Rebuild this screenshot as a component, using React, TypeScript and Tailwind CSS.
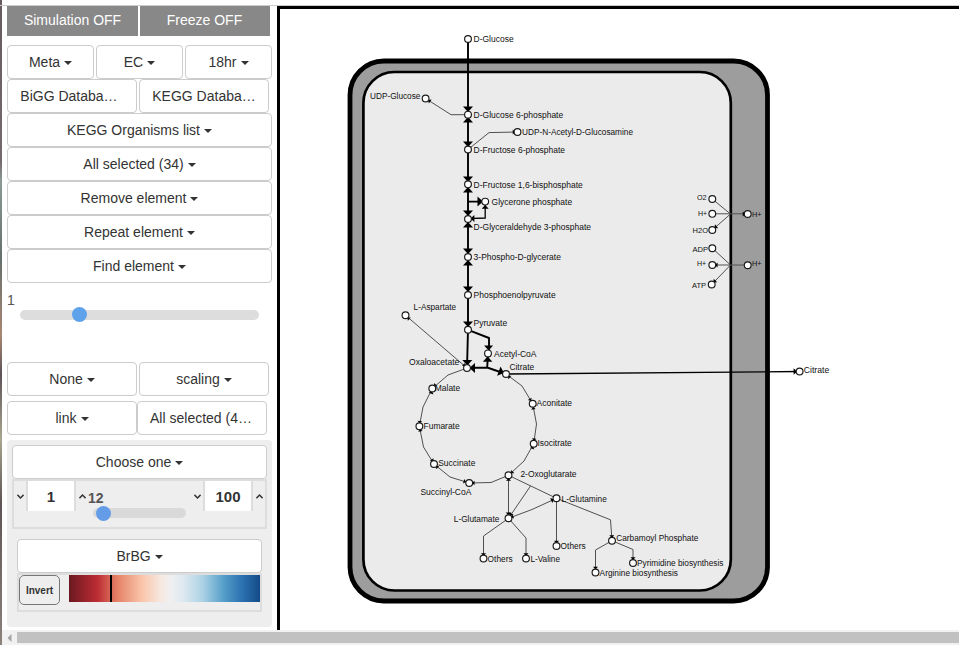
import React from "react";
import clsx from "clsx";

function Caret() {
  return <span className="ml-[4px] inline-block border-x-4 border-t-4 border-x-transparent border-t-[#333] align-middle" />;
}

function Drop({ label, className, caret = true }: { label: string; className?: string; caret?: boolean }) {
  return (
    <button
      className={clsx(
        "h-[34px] shrink-0 whitespace-nowrap rounded border border-[#ccc] bg-white text-center text-sm leading-[20px] text-[#333]",
        className,
      )}
    >
      {label}
      {caret && <Caret />}
    </button>
  );
}

function Chevron({ up = false }: { up?: boolean }) {
  return (
    <svg width="7" height="5" viewBox="0 0 6 4" fill="none" stroke="#333" strokeWidth="1.2">
      <path d={up ? "M0.4 3.4L3 0.8L5.6 3.4" : "M0.4 0.6L3 3.2L5.6 0.6"} />
    </svg>
  );
}

function Stepper({ value }: { value: string }) {
  return (
    <div className="flex h-[30px]">
      <div className="flex w-3 items-center justify-center">
        <Chevron />
      </div>
      <div className="flex w-[50px] items-center justify-center border-x-2 border-[#ddd] bg-white pt-[2px] text-[15px] font-bold text-[#333]">
        {value}
      </div>
      <div className="flex w-3 items-center justify-center">
        <Chevron up />
      </div>
    </div>
  );
}

function Sidebar() {
  return (
    <aside className="h-full w-[277px] shrink-0 pl-[7px]">
      <div className="flex gap-[2px] text-sm text-white [text-shadow:0_1px_1px_rgba(0,0,0,0.45)]">
        <button className="h-[30px] w-[131px] bg-[#888] pb-[2px]">Simulation OFF</button>
        <button className="h-[30px] w-[130px] bg-[#888] pb-[2px] pr-px">Freeze OFF</button>
      </div>
      <div className="mt-[9px] flex gap-[2px]">
        <Drop label="Meta" className="w-[87px]" />
        <Drop label="EC" className="w-[87px]" />
        <Drop label="18hr" className="w-[87px]" />
      </div>
      <div className="flex gap-[2px]">
        <Drop label="BiGG Databa…" caret={false} className="w-[130px] pr-[6px]" />
        <Drop label="KEGG Databa…" caret={false} className="w-[130px]" />
      </div>
      <div className="flex w-[265px] flex-col">
        <Drop label="KEGG Organisms list" />
        <Drop label="All selected (34)" />
        <Drop label="Remove element" />
        <Drop label="Repeat element" />
        <Drop label="Find element" />
      </div>
      <div className="h-[27px] pt-[7px] text-sm leading-5 text-[#555]">1</div>
      <div className="ml-[13px] flex h-[10px] w-[239px] items-center rounded-full bg-[#ddd] pl-[52px]">
        <div className="mb-px size-[15px] shrink-0 rounded-full bg-[#5fa2ec]" />
      </div>
      <div className="mt-[42px] flex gap-[2px]">
        <Drop label="None" className="w-[130px]" />
        <Drop label="scaling" className="w-[130px]" />
      </div>
      <div className="mt-[5px] flex">
        <Drop label="link" className="w-[130px]" />
        <Drop label="All selected (4…" caret={false} className="w-[130px] pr-[2px]" />
      </div>
      <div className="mt-[5px] h-[187px] w-[265px] rounded bg-[#eee] p-[5px]">
        <Drop label="Choose one" className="w-[255px]" />
        <div className="flex h-[50px] border-2 border-[#ddd]">
          <Stepper value="1" />
          <div className="w-[103px]">
            <div className="h-[27px] pt-[7px] text-[14px] font-bold leading-5 text-[#555]">12</div>
            <div className="ml-[5px] flex h-[10px] w-[93px] items-center rounded-full bg-[#d9d9d9] pl-[3px]">
              <div className="size-[15px] shrink-0 rounded-full bg-[#649ce8]" />
            </div>
          </div>
          <Stepper value="100" />
        </div>
        <div className="ml-[5px] mt-[10px] w-[245px]">
          <Drop label="BrBG" className="w-[245px]" />
          <div className="flex h-[39px] border-2 border-[#ddd]">
            <button className="h-[30px] w-[41px] rounded-[5px] border border-[#777] bg-[#eee] text-[10px] font-bold text-[#333]">
              Invert
            </button>
            <div className="ml-[9px] h-[27px] w-[191px] bg-[linear-gradient(to_right,#6b1820,#bd2d35_15%,#e48065_25%,#f9c4a9_38%,#f7e8df_48%,#f0f0f0_53%,#dde9f0_60%,#acd2e5_70%,#559ec9_81%,#2e74b3_90%,#134b87)] pl-[41px]">
              <div className="h-full w-[2px] bg-black" />
            </div>
          </div>
        </div>
      </div>
    </aside>
  );
}

// [x, y]
const nodes: [number, number][] = [
  [468, 39], [468, 114.7], [468, 149.5], [468, 184.3], [485.2, 201.6], [468, 219], [468, 257], [468, 295],
  [468, 329.8], [488, 353.4], [467, 368], [506, 374], [432.3, 388.5], [419.4, 426.3], [434, 464], [469.2, 483],
  [508.5, 475.3], [532.7, 403.7], [533.7, 443.7], [508.5, 518.3], [556.5, 498.3], [556.5, 546], [483.5, 558.5],
  [526, 558.5], [612, 540.7], [595.5, 572.5], [633, 563], [425.6, 98.5], [517.5, 132], [405.5, 315.3],
  [712.3, 199], [712.3, 213.8], [712.3, 230], [747.7, 214], [712.3, 248.2], [712.3, 265], [711.7, 284.5],
  [747.7, 265.3], [799.6, 371.5],
];

// [text, x, baseline, width]
const labels: [string, number, number, number][] = [
  ["D-Glucose", 473.6, 42, 40], ["UDP-Glucose", 370, 99, 50.4], ["D-Glucose 6-phosphate", 473.6, 118, 89.6],
  ["UDP-N-Acetyl-D-Glucosamine", 522, 135, 111], ["D-Fructose 6-phosphate", 473.6, 153, 91.5],
  ["D-Fructose 1,6-bisphosphate", 473.6, 188, 109.2], ["Glycerone phosphate", 491.6, 205, 80.5],
  ["D-Glyceraldehyde 3-phosphate", 473.6, 230, 117.4], ["3-Phospho-D-glycerate", 473.6, 260, 87.3],
  ["Phosphoenolpyruvate", 473.6, 298, 82], ["L-Aspartate", 413.6, 310, 42.6], ["Pyruvate", 473.6, 326, 33.6],
  ["Acetyl-CoA", 494, 357, 42.5], ["Oxaloacetate", 409, 365, 50.3], ["Citrate", 509.4, 370, 24.8],
  ["Malate", 434.8, 391, 25.3], ["Aconitate", 536.6, 406, 35.4], ["Fumarate", 423.6, 429, 36],
  ["Isocitrate", 537.4, 446, 34.4], ["Succinate", 438.2, 466, 37.2], ["Succinyl-CoA", 420.4, 495, 51],
  ["2-Oxoglutarate", 520.4, 477, 56.2], ["L-Glutamine", 561.6, 502, 45.2], ["L-Glutamate", 453.8, 522, 45.6],
  ["Others", 560.6, 549, 25], ["Others", 487.6, 562, 25], ["L-Valine", 530.4, 562, 29.6],
  ["Carbamoyl Phosphate", 616.2, 541, 82.2], ["Pyrimidine biosynthesis", 637, 566, 86.4],
  ["Arginine biosynthesis", 599.6, 576, 78.4], ["Citrate", 803.8, 373, 25.4],
];

const ionLabels: [string, number, number, number][] = [
  ["O2", 697, 200, 9.6], ["H+", 698, 216, 9.2], ["H2O", 692.6, 233, 15.4], ["H+", 752, 217, 9.6],
  ["ADP", 692.6, 252, 15.4], ["H+", 697, 266, 9.2], ["ATP", 692, 288, 14], ["H+", 752, 266, 9.6],
];

// [tip x, tip y, heading in degrees (0 = right, 90 = down), scale]
const heads: [number, number, number, number][] = [
  [468, 112, 90, 1], [468, 117, 270, 1], [468, 147, 90, 1], [468, 182, 90, 1], [468, 187, 270, 1],
  [483, 201.6, 0, 1], [468, 216, 90, 1], [468, 222, 270, 1], [468, 254, 90, 1], [468, 260, 270, 1],
  [468, 292, 90, 1], [468, 327, 90, 1], [467.3, 365.5, 90, 1], [488.6, 350.5, 90, 0.9], [487.6, 356.5, 270, 0.95],
  [469.5, 368, 180, 1], [504, 373, 20, 1], [485.2, 205, 270, 0.7], [470.5, 218.6, 180, 0.7],
  [428, 100, 213, 0.5], [515.5, 132, 0, 0.5], [407.5, 317.5, 222, 0.45], [465, 366, 42, 0.4],
  [432, 391, 290, 0.5], [434, 386, 135, 0.4], [419.6, 423.5, 95, 0.45], [420, 429, 260, 0.45],
  [433, 461.5, 60, 0.45], [436, 466, 220, 0.45], [466, 482, 18, 0.45], [472, 483, 180, 0.45],
  [511, 473.3, 135, 0.45], [508, 376, 220, 0.45], [531, 401, 60, 0.45], [533, 407, 260, 0.45],
  [534, 441, 95, 0.45], [533, 446.5, 290, 0.45], [508.5, 478, 270, 0.5], [508.5, 515.5, 90, 0.55],
  [510, 515.8, 120, 0.5], [554, 499.3, 337, 0.55], [511, 517.3, 157, 0.45], [556.5, 543.5, 90, 0.5],
  [483.5, 556, 90, 0.5], [526, 556, 90, 0.5], [611.8, 538, 90, 0.5], [595.5, 569.5, 90, 0.5],
  [633, 560, 90, 0.5], [745.5, 214, 0, 0.5], [714.5, 228, 140, 0.5], [714.8, 265, 180, 0.5],
  [713.5, 282.5, 135, 0.5], [797.2, 371.5, 0, 0.65],
];

function Pathway() {
  return (
    <svg width="679" height="621" viewBox="280 9 679 621" className="block" fontFamily="Liberation Sans, Arial, sans-serif">
      <rect x="350" y="61" width="417.5" height="540" rx="34" fill="#9d9d9d" stroke="#000" strokeWidth="4.8" />
      <rect x="363.4" y="72" width="367.4" height="518.5" rx="31" fill="#ebebeb" stroke="#000" strokeWidth="2.7" />
      <g fill="none" stroke="#505050" strokeWidth="1">
        <path d="M468 114.7H451L425.6 98.5" />
        <path d="M468 149.5L489 132.6L517.5 132" />
        <path d="M405.5 315.3L467 368" />
        <path d="M467 368L448 375L432.3 388.5L423 407L419.4 426.3L423.5 447L434 464L450 477L469.2 483L491 482.5L508.5 475.3L524 461L533.7 443.7L536.5 424L532.7 403.7L522 386L506 374" />
        <path d="M508.5 475.3V518.3L530.5 486M508.5 475.3L556.5 498.3L532 509.5L508.5 518.3" />
        <path d="M508.5 518.3L483.5 536V558.5M508.5 518.3L526 538V558.5" />
        <path d="M556.5 498.3V546M556.5 498.3L610.5 519.8L612 540.7L595.5 550V572.5M612 540.7L633 549.5V563" />
        <path d="M712.3 199L730.5 214L712.3 230M712.3 213.8H747.7" />
        <path d="M712.3 248.2L730.5 265L711.7 284.5M712.3 265H747.7" />
      </g>
      <g fill="none" stroke="#000" strokeWidth="1.9">
        <path d="M468 39V329.8L467 368M468 201.6H485" />
        <path d="M485.2 201.6V218L468 218.6" strokeWidth="1.3" />
        <path d="M468 329.8L489 338V353.4M488 353.4L487.2 367.5M467 368L487.2 367.5L506 374" />
        <path d="M506 374L799.6 371.5" strokeWidth="1.3" />
      </g>
      {heads.map(([x, y, a, s], i) => (
        <path key={i} d="M0 0L-5.5 -5V5Z" transform={`translate(${x} ${y}) rotate(${a}) scale(${s})`} />
      ))}
      {nodes.map(([x, y], i) => (
        <circle key={i} cx={x} cy={y} r="3.4" fill="#fff" stroke="#1a1a1a" strokeWidth="1.15" />
      ))}
      <g fontSize="9.6" fill="#111">
        {labels.map(([t, x, y, w], i) => (
          <text key={i} x={x} y={y} textLength={w} lengthAdjust="spacingAndGlyphs">{t}</text>
        ))}
      </g>
      <g fontSize="7.5" fill="#111">
        {ionLabels.map(([t, x, y, w], i) => (
          <text key={i} x={x} y={y} textLength={w} lengthAdjust="spacingAndGlyphs">{t}</text>
        ))}
      </g>
    </svg>
  );
}

export default function App() {
  return (
    <div className="flex h-[645px] w-[959px] overflow-hidden bg-white font-['Liberation_Sans',Arial,sans-serif]">
      <div className="-mr-[2px] w-[2px] shrink-0 bg-[linear-gradient(#665c5e,#756a6c_25%,#8b9b94_28%,#66706c_40%,#a88672_52%,#5e5358_58%,#a7a68f_68%,#5f5556_78%,#8b817b)]" />
      <div className="flex min-w-0 flex-1 flex-col">
        <div className="h-[6px] shrink-0 border-b border-[#ccc]" />
        <div className="flex h-[624px] shrink-0">
          <Sidebar />
          <main className="flex-1 border-l-3 border-t-3 border-black">
            <Pathway />
          </main>
        </div>
        <div className="ml-[2px] flex h-[15px] items-center bg-[#f1f1f1]">
          <div className="flex w-[15px] justify-center">
            <svg width="5" height="8" viewBox="0 0 5 8" fill="#a3a3a3">
              <path d="M4.5 0V8L0.5 4Z" />
            </svg>
          </div>
          <div className="h-[11px] flex-1 bg-[#c1c1c1]" />
        </div>
      </div>
    </div>
  );
}
